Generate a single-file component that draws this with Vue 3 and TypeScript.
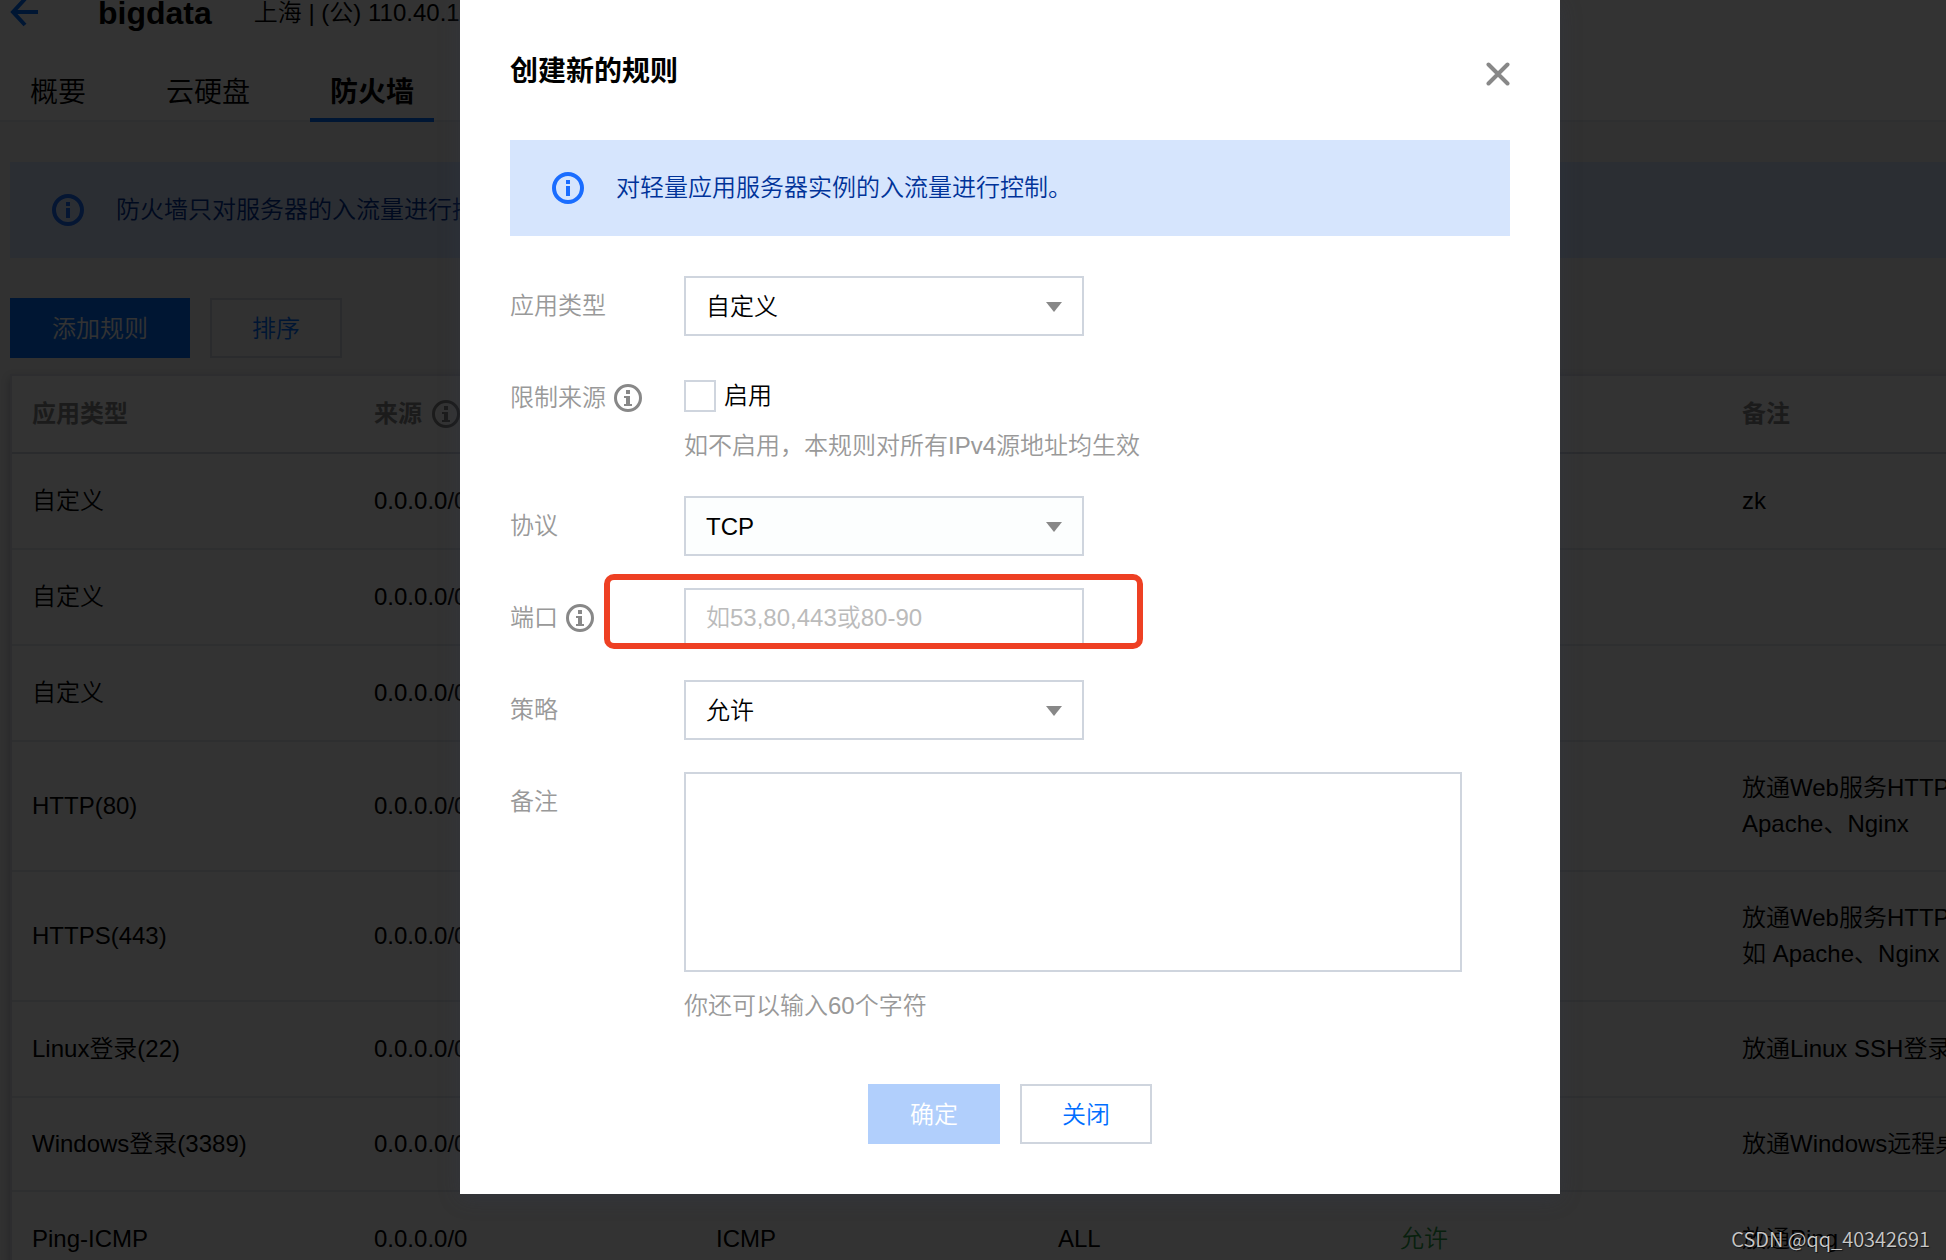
<script setup lang="ts">
import { ref } from 'vue'

interface Rule {
  app: string
  source: string
  protocol?: string
  port?: string
  policy?: string
  remark: string
  size?: 'tall' | 'short'
}

const tabs = ['概要', '云硬盘', '防火墙']
const activeTab = ref('防火墙')

const rules: Rule[] = [
  { app: '自定义', source: '0.0.0.0/0', remark: 'zk' },
  { app: '自定义', source: '0.0.0.0/0', remark: '' },
  { app: '自定义', source: '0.0.0.0/0', remark: '' },
  { app: 'HTTP(80)', source: '0.0.0.0/0', remark: '放通Web服务HTTP(80)，如\nApache、Nginx', size: 'tall' },
  { app: 'HTTPS(443)', source: '0.0.0.0/0', remark: '放通Web服务HTTPS(443)，\n如 Apache、Nginx', size: 'tall' },
  { app: 'Linux登录(22)', source: '0.0.0.0/0', remark: '放通Linux SSH登录' },
  { app: 'Windows登录(3389)', source: '0.0.0.0/0', remark: '放通Windows远程桌面登录', size: 'short' },
  { app: 'Ping-ICMP', source: '0.0.0.0/0', protocol: 'ICMP', port: 'ALL', policy: '允许', remark: '放通Ping' },
]

const appType = ref('自定义')
const limited = ref(false)
const protocol = ref('TCP')
const port = ref('')
const policy = ref('允许')
const remark = ref('')
</script>

<template>
  <div class="screen">
    <div class="console">
      <header class="head">
        <div class="title-row">
          <a href="#" class="back" aria-label="返回">
            <svg width="28" height="28" viewBox="0 0 28 28" fill="none" stroke="currentColor" stroke-width="4">
              <path d="M15 0 3 13l12 13M2 13h26" />
            </svg>
          </a>
          <h1>bigdata</h1>
          <span class="meta">上海 | (公) 110.40.17</span>
        </div>
        <nav class="tabs">
          <button
            v-for="tab in tabs"
            :key="tab"
            type="button"
            class="tab"
            :class="{ active: tab === activeTab }"
            @click="activeTab = tab"
          >{{ tab }}</button>
        </nav>
      </header>

      <main class="content">
        <div class="alert">
          <svg class="alert-icon" width="32" height="32" viewBox="0 0 32 32">
            <circle cx="16" cy="16" r="14" fill="none" stroke="currentColor" stroke-width="4" />
            <path d="M14 8h4v4h-4zM14 14h4v10h-4z" fill="currentColor" />
          </svg>
          <span>防火墙只对服务器的入流量进行控制</span>
        </div>
        <div class="toolbar">
          <button type="button" class="btn primary">添加规则</button>
          <button type="button" class="btn">排序</button>
        </div>
        <div class="panel">
          <table>
            <colgroup>
              <col v-for="n in 5" :key="n" class="col" />
              <col />
            </colgroup>
            <thead>
              <tr>
                <th>应用类型</th>
                <th>
                  <span class="with-icon">来源
                    <svg width="28" height="28" viewBox="0 0 28 28">
                      <circle cx="14" cy="14" r="12.5" fill="none" stroke="currentColor" stroke-width="3" />
                      <path d="M12 6h4v4h-4zM10 12h6v8h2v2h-8v-2h2v-6h-2z" fill="currentColor" />
                    </svg>
                  </span>
                </th>
                <th></th>
                <th></th>
                <th></th>
                <th>备注</th>
              </tr>
            </thead>
            <tbody>
              <tr v-for="(rule, i) in rules" :key="i" :class="rule.size">
                <td>{{ rule.app }}</td>
                <td>{{ rule.source }}</td>
                <td>{{ rule.protocol }}</td>
                <td>{{ rule.port }}</td>
                <td class="allow">{{ rule.policy }}</td>
                <td class="remark">{{ rule.remark }}</td>
              </tr>
            </tbody>
          </table>
        </div>
      </main>

      <div class="overlay">
        <section class="dialog" role="dialog" aria-labelledby="dialog-title">
          <div class="dialog-head">
            <h2 id="dialog-title">创建新的规则</h2>
            <button type="button" class="close" aria-label="关闭">
              <svg width="24" height="24" viewBox="0 0 24 24" stroke="currentColor" stroke-width="4" stroke-linecap="round">
                <path d="M2.5 2.5l19 19M21.5 2.5l-19 19" />
              </svg>
            </button>
          </div>
          <div class="alert">
            <svg class="alert-icon" width="32" height="32" viewBox="0 0 32 32">
              <circle cx="16" cy="16" r="14" fill="none" stroke="currentColor" stroke-width="4" />
              <path d="M14 8h4v4h-4zM14 14h4v10h-4z" fill="currentColor" />
            </svg>
            <span>对轻量应用服务器实例的入流量进行控制。</span>
          </div>

          <form class="form" @submit.prevent>
            <div class="row">
              <label class="label" for="app-type">应用类型</label>
              <div class="select">
                <select id="app-type" v-model="appType"><option>自定义</option></select>
                <svg class="arrow" width="16" height="10" viewBox="0 0 16 10"><path d="M0 0h16L8 10z" fill="currentColor" /></svg>
              </div>
            </div>
            <div class="row">
              <span class="label with-icon">限制来源
                <svg width="28" height="28" viewBox="0 0 28 28">
                  <circle cx="14" cy="14" r="12.5" fill="none" stroke="currentColor" stroke-width="3" />
                  <path d="M12 6h4v4h-4zM10 12h6v8h2v2h-8v-2h2v-6h-2z" fill="currentColor" />
                </svg>
              </span>
              <div class="field">
                <label class="check"><input v-model="limited" type="checkbox" />启用</label>
                <p class="hint">如不启用，本规则对所有IPv4源地址均生效</p>
              </div>
            </div>
            <div class="row">
              <label class="label" for="protocol">协议</label>
              <div class="select">
                <select id="protocol" v-model="protocol" class="hovered"><option>TCP</option></select>
                <svg class="arrow" width="16" height="10" viewBox="0 0 16 10"><path d="M0 0h16L8 10z" fill="currentColor" /></svg>
              </div>
            </div>
            <div class="row port-row">
              <label class="label with-icon" for="port">端口
                <svg width="28" height="28" viewBox="0 0 28 28">
                  <circle cx="14" cy="14" r="12.5" fill="none" stroke="currentColor" stroke-width="3" />
                  <path d="M12 6h4v4h-4zM10 12h6v8h2v2h-8v-2h2v-6h-2z" fill="currentColor" />
                </svg>
              </label>
              <input id="port" v-model="port" class="input" type="text" placeholder="如53,80,443或80-90" />
              <span class="marker"></span>
            </div>
            <div class="row">
              <label class="label" for="policy">策略</label>
              <div class="select">
                <select id="policy" v-model="policy"><option>允许</option></select>
                <svg class="arrow" width="16" height="10" viewBox="0 0 16 10"><path d="M0 0h16L8 10z" fill="currentColor" /></svg>
              </div>
            </div>
            <div class="row">
              <label class="label" for="remark">备注</label>
              <div class="field">
                <textarea id="remark" v-model="remark" maxlength="60"></textarea>
                <p class="hint">你还可以输入60个字符</p>
              </div>
            </div>
            <div class="actions">
              <button type="submit" class="btn confirm" disabled>确定</button>
              <button type="button" class="btn">关闭</button>
            </div>
          </form>
        </section>
      </div>
    </div>
    <div class="watermark">CSDN @qq_40342691</div>
  </div>
</template>

<style>
body {
  margin: 0;
  overflow: hidden;
}
</style>

<style scoped>
* {
  box-sizing: border-box;
}

.screen {
  position: relative;
  height: 100vh;
  overflow: hidden;
  font-family: 'Liberation Sans', 'Noto Sans CJK SC', sans-serif;
  font-size: 24px;
  font-weight: 350;
  line-height: 36px;
  color: #000;
}

/* The console is wider than the window, so its right edge is cut off. */
.console {
  position: relative;
  width: calc(100% + 74px);
  height: 100%;
  overflow: hidden;
  background: #f2f2f2;
}

button,
input,
select,
textarea {
  font: inherit;
  color: inherit;
}

h1,
h2,
p {
  margin: 0;
}

svg {
  display: block;
  flex: none;
}

.head {
  background: #fff;
  border-bottom: 2px solid #e5e8ed;
}

.title-row {
  display: flex;
  align-items: center;
  height: 26px;
  padding-left: 10px;
}

.back {
  color: #006eff;
}

h1 {
  margin: 0 42px 0 60px;
  font-size: 32px;
  font-weight: 700;
}

.meta {
  line-height: 24px;
}

.tabs {
  display: flex;
  gap: 40px;
  margin: 38px 0 -2px;
  padding-left: 10px;
}

.tab {
  padding: 4px 20px 0;
  border: 0;
  border-bottom: 4px solid transparent;
  background: none;
  font-size: 28px;
  line-height: 50px;
}

.tab.active {
  border-color: #006eff;
  font-weight: 700;
}

.content {
  padding: 40px 10px;
}

.alert {
  display: flex;
  align-items: center;
  gap: 32px;
  height: 96px;
  padding: 0 42px;
  background: #d6e5fd;
  color: #003399;
}

.alert-icon {
  color: #1a6dff;
}

.toolbar {
  display: flex;
  gap: 20px;
  margin: 40px 0 16px;
}

.btn {
  min-width: 132px;
  height: 60px;
  padding: 2px 0 0;
  border: 2px solid #cfd5de;
  background: #fff;
  color: #006eff;
}

.toolbar .btn {
  background: transparent;
}

.toolbar .primary {
  min-width: 180px;
  border-color: #006eff;
  background: #006eff;
  color: #fff;
}

.panel {
  border: 2px solid #dfe2ea;
  background: #fff;
  box-shadow: 0 4px 8px rgba(54, 58, 80, 0.32);
}

table {
  width: 100%;
  table-layout: fixed;
  border-spacing: 0;
}

.col {
  width: 342px;
}

th,
td {
  padding: 0 20px;
  text-align: left;
  white-space: nowrap;
}

th {
  height: 78px;
  border-bottom: 2px solid #cfd5de;
  color: #888;
  font-weight: 700;
}

td {
  height: 96px;
  border-bottom: 2px solid #e5e8ed;
}

.tall td {
  height: 130px;
}

.short td {
  height: 94px;
}

.remark {
  white-space: pre;
}

.allow {
  color: #2ba245;
}

.with-icon {
  display: flex;
  align-items: center;
  gap: 8px;
}

th .with-icon {
  gap: 10px;
}

.overlay {
  position: absolute;
  inset: 0;
  display: flex;
  justify-content: center;
  align-items: flex-start;
  background: rgba(0, 0, 0, 0.8);
}

.dialog {
  width: 1100px;
  max-width: 100%;
  padding: 50px;
  background: #fff;
  box-shadow: 0 4px 20px rgba(54, 58, 80, 0.32);
}

.dialog-head {
  display: flex;
  align-items: center;
  justify-content: space-between;
  height: 44px;
  margin-bottom: 46px;
}

h2 {
  font-size: 28px;
  line-height: 40px;
  font-weight: 700;
}

.close {
  padding: 4px 0 0;
  border: 0;
  background: none;
  color: #888;
}

.form {
  display: flex;
  flex-direction: column;
  gap: 32px;
  padding-top: 40px;
}

.row {
  display: flex;
  align-items: flex-start;
}

.label {
  flex: 0 0 174px;
  color: #999;
  line-height: 60px;
}

.label svg {
  color: #888;
}

.select {
  position: relative;
  width: 400px;
}

select,
.input {
  display: block;
  width: 400px;
  height: 60px;
  padding: 0 20px;
  border: 2px solid #cfd5de;
  border-radius: 0;
  background: #fff;
  appearance: none;
  outline: none;
}

select {
  padding-top: 2px;
}

.hovered {
  background: #fcfefe;
}

.arrow {
  position: absolute;
  top: 26px;
  right: 22px;
  color: #888;
  pointer-events: none;
}

.input::placeholder {
  color: #bbb;
  opacity: 1;
}

.field {
  flex: 1;
}

.check {
  display: flex;
  align-items: center;
  gap: 8px;
  height: 56px;
  margin-bottom: 4px;
}

.check input {
  width: 32px;
  height: 32px;
  margin: 0;
  border: 2px solid #cfd5de;
  background: #fff;
  appearance: none;
}

.hint {
  color: #999;
}

textarea {
  display: block;
  width: 778px;
  max-width: 100%;
  height: 200px;
  margin-bottom: 16px;
  padding: 10px 20px;
  border: 2px solid #cfd5de;
  outline: none;
  resize: none;
}

.port-row {
  position: relative;
}

/* Red highlight laid over the port field. */
.marker {
  position: absolute;
  top: -14px;
  left: 94px;
  width: 539px;
  height: 75px;
  border: 6px solid #ee4023;
  border-radius: 10px;
  pointer-events: none;
}

.actions {
  display: flex;
  justify-content: center;
  gap: 20px;
  padding-top: 28px;
}

.confirm {
  border-color: #b1cffc;
  background: #b1cffc;
  color: #fff;
}

.watermark {
  position: absolute;
  right: 16px;
  bottom: 6px;
  font-family: 'Noto Sans CJK SC', sans-serif;
  font-size: 20px;
  line-height: 30px;
  color: #c8c8c8;
  text-shadow: 1px 1px 1px rgba(0, 0, 0, 0.6);
}
</style>
